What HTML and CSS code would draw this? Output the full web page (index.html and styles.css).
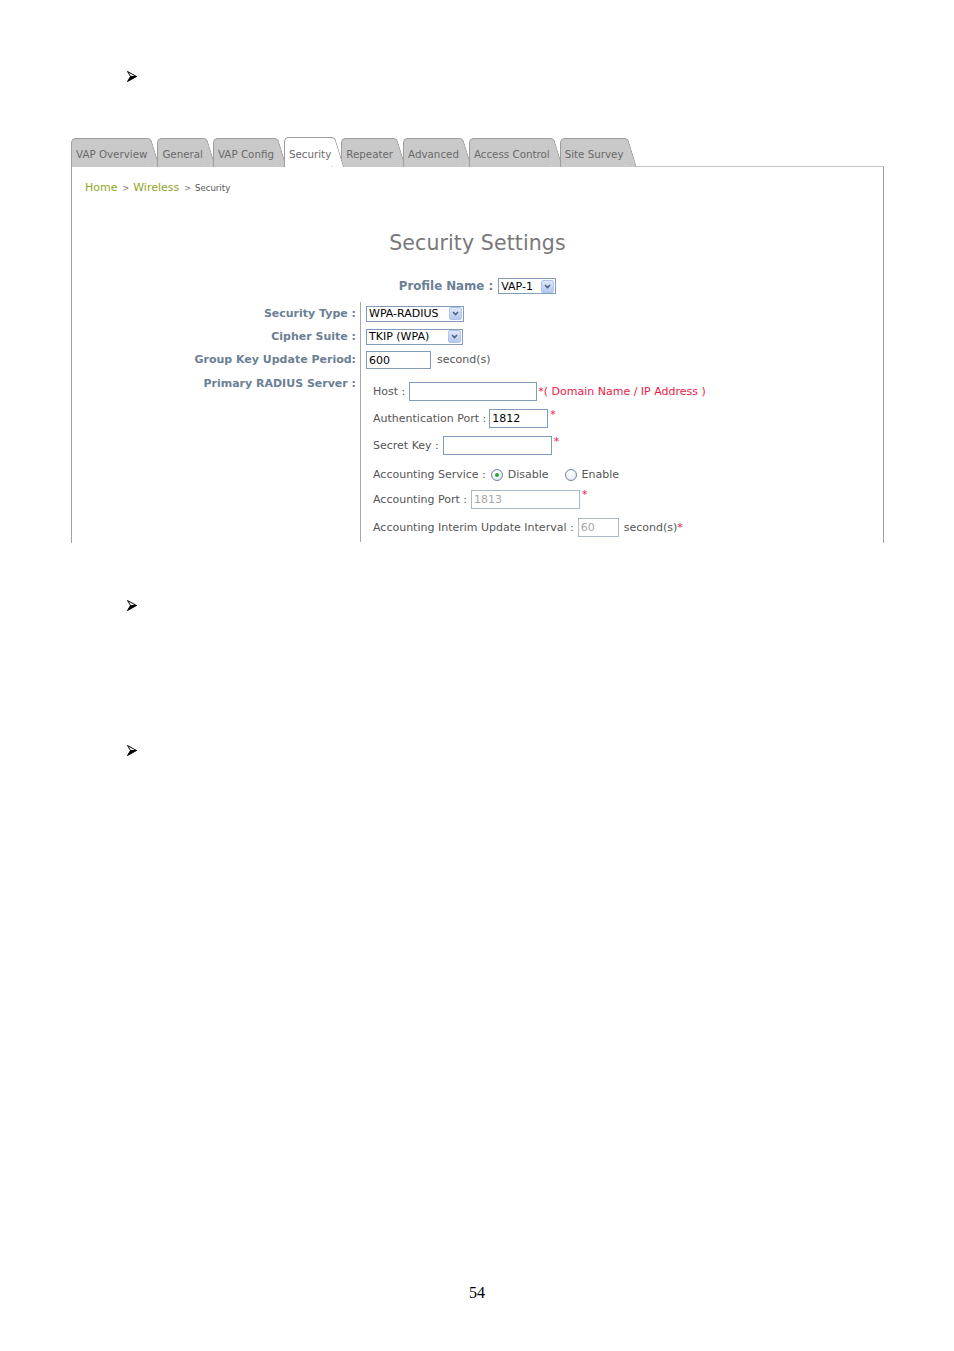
FILE: index.html
```html
<!DOCTYPE html>
<html>
<head>
<meta charset="utf-8">
<title>Security Settings</title>
<link rel="stylesheet" href="styles.css">
</head>
<body>
<div class="page">
  <div class="bullet b1"><svg width="12" height="13" viewBox="0 0 12 13"><path d="M1.5 1.5 L10.5 6.5 L4.5 6.5 Z" fill="#fff" stroke="#000" stroke-width="1" stroke-linejoin="round"/><path d="M4.5 6.5 L10.5 6.5 L1.5 11.5 Z" fill="#000" stroke="#000" stroke-width="1" stroke-linejoin="round"/></svg></div>

  <div class="ui">
    <div class="tabs">
      <div class="tab">VAP Overview</div>
      <div class="tab">General</div>
      <div class="tab">VAP Config</div>
      <div class="tab active">Security</div>
      <div class="tab">Repeater</div>
      <div class="tab">Advanced</div>
      <div class="tab">Access Control</div>
      <div class="tab">Site Survey</div>
    </div>
    <div class="panel">
      <div class="crumb"><span class="lnk">Home</span><span class="sep">&gt;</span><span class="lnk">Wireless</span><span class="sep">&gt;</span><span class="cur">Security</span></div>
      <div class="title">Security Settings</div>
      <div class="profile">
        <span class="lbl lbl-profile">Profile Name :</span>
        <span class="sel sel-vap"><span class="sel-text">VAP-1</span><svg class="drop" width="13" height="13" viewBox="0 0 13 13"><defs><linearGradient id="g1" x1="0" y1="0" x2="0" y2="1"><stop offset="0" stop-color="#dfe8fb"/><stop offset="1" stop-color="#b4c7ef"/></linearGradient></defs><rect x="0.5" y="0.5" width="12" height="12" rx="1.5" fill="url(#g1)" stroke="#b3c4ea"/><path d="M4 5 L6.5 7.5 L9 5" fill="none" stroke="#4d6185" stroke-width="1.6"/></svg></span>
      </div>
      <div class="form">
        <div class="lbl">Security Type :</div>
        <div class="val"><span class="sel sel-type"><span class="sel-text">WPA-RADIUS</span><svg class="drop" width="13" height="13" viewBox="0 0 13 13"><rect x="0.5" y="0.5" width="12" height="12" rx="1.5" fill="url(#g1)" stroke="#b3c4ea"/><path d="M4 5 L6.5 7.5 L9 5" fill="none" stroke="#4d6185" stroke-width="1.6"/></svg></span></div>

        <div class="lbl">Cipher Suite :</div>
        <div class="val"><span class="sel sel-cipher"><span class="sel-text">TKIP (WPA)</span><svg class="drop" width="13" height="13" viewBox="0 0 13 13"><rect x="0.5" y="0.5" width="12" height="12" rx="1.5" fill="url(#g1)" stroke="#b3c4ea"/><path d="M4 5 L6.5 7.5 L9 5" fill="none" stroke="#4d6185" stroke-width="1.6"/></svg></span></div>

        <div class="lbl">Group Key Update Period:</div>
        <div class="val"><span class="inp inp-gk">600</span><span class="txt unit">second(s)</span></div>

        <div class="lbl lbl-top">Primary RADIUS Server :</div>
        <div class="val val-nested">
          <div class="nrow"><span class="txt">Host :</span><span class="inp inp-host"></span><span class="req">*( Domain Name / IP Address )</span></div>
          <div class="nrow"><span class="txt">Authentication Port :</span><span class="inp inp-auth">1812</span><span class="req star">*</span></div>
          <div class="nrow"><span class="txt">Secret Key :</span><span class="inp inp-key"></span><span class="req star">*</span></div>
          <div class="nrow nrow-radio"><span class="txt">Accounting Service :</span><span class="radio checked"></span><span class="txt rlabel">Disable</span><span class="radio r2"></span><span class="txt rlabel">Enable</span></div>
          <div class="nrow nrow-acct"><span class="txt">Accounting Port :</span><span class="inp inp-acct dis">1813</span><span class="req star">*</span></div>
          <div class="nrow nrow-int"><span class="txt">Accounting Interim Update Interval :</span><span class="inp inp-int dis">60</span><span class="txt unit2">second(s)</span><span class="req star0">*</span></div>
        </div>
      </div>
    </div>
  </div>

  <div class="bullet b2"><svg width="12" height="13" viewBox="0 0 12 13"><path d="M1.5 1.5 L10.5 6.5 L4.5 6.5 Z" fill="#fff" stroke="#000" stroke-width="1" stroke-linejoin="round"/><path d="M4.5 6.5 L10.5 6.5 L1.5 11.5 Z" fill="#000" stroke="#000" stroke-width="1" stroke-linejoin="round"/></svg></div>
  <div class="bullet b3"><svg width="12" height="13" viewBox="0 0 12 13"><path d="M1.5 1.5 L10.5 6.5 L4.5 6.5 Z" fill="#fff" stroke="#000" stroke-width="1" stroke-linejoin="round"/><path d="M4.5 6.5 L10.5 6.5 L1.5 11.5 Z" fill="#000" stroke="#000" stroke-width="1" stroke-linejoin="round"/></svg></div>

  <div class="pagenum">54</div>
</div>
</body>
</html>
```

FILE: styles.css
```css
html, body {
  margin: 0;
  padding: 0;
  background: #ffffff;
}

.page {
  position: relative;
  width: 954px;
  height: 1351px;
  display: flex;
  flex-direction: column;
  font-family: "DejaVu Sans", Verdana, sans-serif;
}

.bullet {
  margin-left: 126px;
  height: 13px;
}
.bullet svg { display: block; }
.b1 { margin-top: 70px; }
.b2 { margin-top: 56px; }
.b3 { margin-top: 132px; }

.pagenum {
  margin-top: auto;
  margin-bottom: 48px;
  text-align: center;
  font-family: "Liberation Serif", "Times New Roman", serif;
  font-size: 16px;
  line-height: 20px;
  color: #000;
}

.ui {
  margin-top: 55px;
  margin-left: 71px;
  width: 813px;
}

/* Tabs */
.tabs {
  display: flex;
  align-items: flex-end;
  height: 29px;
  margin-bottom: -1px;
  position: relative;
  z-index: 1;
}

.tab {
  position: relative;
  box-sizing: border-box;
  height: 29px;
  line-height: 30px;
  padding: 0 1px 0 4px;
  margin-right: 9px;
  background: #c9c9c9;
  border-top: 1px solid #9d9d9d;
  border-left: 1px solid #9d9d9d;
  border-top-left-radius: 5px;
  color: #6a6a6a;
  font-size: 10.3px;
  white-space: nowrap;
}
.tab::after {
  content: "";
  position: absolute;
  top: -1px;
  left: calc(100% - 8px);
  width: 10px;
  height: 28px;
  background: inherit;
  border-top: 1px solid #9d9d9d;
  border-right: 1px solid #9d9d9d;
  border-top-right-radius: 4px;
  transform: skewX(17deg);
  transform-origin: top left;
  z-index: -1;
}
.tab.active {
  background: #ffffff;
  height: 30px;
  line-height: 32px;
  z-index: 2;
}
.tab.active::after {
  height: 29px;
  z-index: -1;
}

/* Panel */
.panel {
  box-sizing: border-box;
  height: 377px;
  border-top: 1px solid #c4c4c4;
  border-left: 1px solid #a0a0a0;
  border-right: 1px solid #a0a0a0;
  background: #ffffff;
  position: relative;
}

.crumb {
  margin-top: 14px;
  padding-left: 13px;
  height: 14px;
  line-height: 14px;
  font-size: 11px;
  display: flex;
  align-items: baseline;
}
.crumb .lnk { color: #8fa52a; }
.crumb .sep { color: #777; font-size: 8px; margin: 0 4px 0 5px; }
.crumb .cur { color: #555; font-size: 8.6px; }

.title {
  margin-top: 35px;
  text-align: center;
  font-size: 20.5px;
  line-height: 26px;
  color: #787878;
  letter-spacing: 0.1px;
}

.profile {
  margin-top: 20px;
  height: 20px;
  display: flex;
  justify-content: center;
  align-items: center;
  gap: 5px;
}
.lbl {
  font-weight: bold;
  font-size: 11px;
  color: #6b7f95;
  white-space: nowrap;
}
.lbl-profile { font-size: 11.8px; }

/* select look-alike */
.sel {
  box-sizing: border-box;
  display: inline-flex;
  align-items: center;
  justify-content: space-between;
  height: 16px;
  border: 1px solid #7f9db9;
  background: #fff;
  padding: 0 1px 0 2px;
  font-size: 11px;
  color: #000;
}
.sel-vap { width: 58px; }
.sel-type { width: 98px; }
.sel-cipher { width: 97px; }
.drop { display: block; flex: none; }

/* form grid */
.form {
  margin-top: 6px;
  display: grid;
  grid-template-columns: 288px 1fr;
  grid-auto-rows: 23px;
}
.form > .lbl {
  text-align: right;
  padding-right: 4px;
  display: flex;
  align-items: center;
  justify-content: flex-end;
}
.form > .lbl-top {
  align-items: flex-start;
  padding-top: 6px;
}
.val {
  border-left: 1px solid #a8a8a8;
  padding-left: 5px;
  display: flex;
  align-items: center;
}
.val-nested {
  height: 171px;
  display: block;
  padding-left: 12px;
  padding-top: 7px;
  box-sizing: border-box;
}

.txt {
  font-size: 11px;
  color: #555;
  white-space: nowrap;
}
.unit { margin-left: 6px; }
.unit2 { margin-left: 5px; }

.inp {
  box-sizing: border-box;
  display: inline-block;
  height: 19px;
  line-height: 17px;
  border: 1px solid #7f9db9;
  background: #fff;
  padding-left: 2px;
  font-size: 11px;
  color: #000;
}
.inp.dis { color: #a8a8a8; border-color: #a9b9c9; }
.inp-gk { width: 65px; height: 18px; }
.inp-host { width: 128px; margin-left: 4px; }
.inp-auth { width: 59px; margin-left: 3px; }
.inp-key { width: 109px; margin-left: 4px; }
.inp-acct { width: 109px; margin-left: 4px; }
.inp-int { width: 41px; margin-left: 4px; }

.req {
  color: #ee1848;
  font-size: 11px;
  white-space: nowrap;
  margin-left: 1px;
}
.star { align-self: flex-start; margin-top: 3px; margin-left: 2px; }
.nrow-acct .star { margin-top: 0; }
.star0 { margin-left: 0; }

.nrow {
  display: flex;
  align-items: center;
  height: 27px;
}
.nrow-radio { margin-top: 2px; }
.nrow-acct { height: 23px; }
.nrow-int { margin-top: 3px; }

.radio {
  box-sizing: border-box;
  width: 12px;
  height: 12px;
  border-radius: 50%;
  border: 1px solid #6d84a0;
  background: radial-gradient(circle at 40% 35%, #ffffff, #dde4ec);
  margin-left: 5px;
  margin-right: 5px;
  position: relative;
}
.radio.checked::after {
  content: "";
  position: absolute;
  left: 3px;
  top: 3px;
  width: 4px;
  height: 4px;
  border-radius: 50%;
  background: #2fa32f;
}
.radio.r2 { margin-left: 16px; }
```
